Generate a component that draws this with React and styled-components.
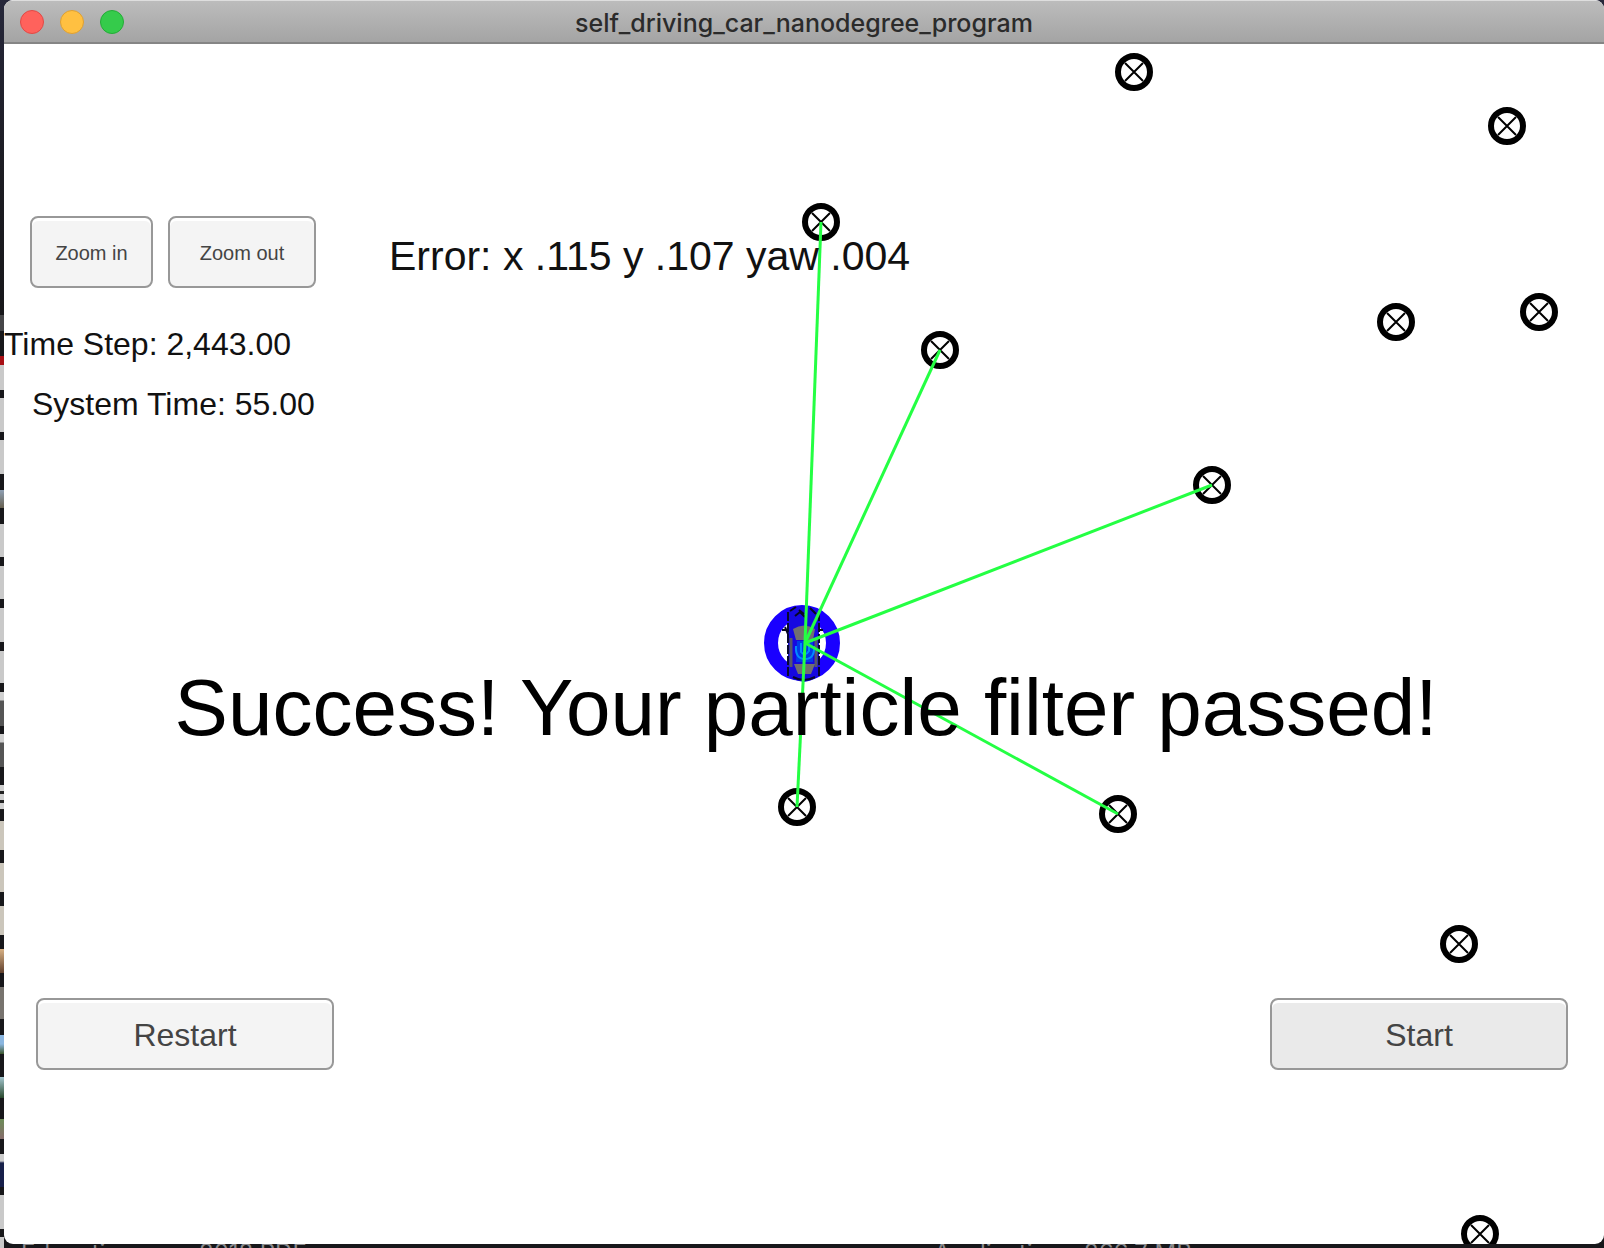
import React from "react";
import styled, { createGlobalStyle } from "styled-components";

const GlobalStyle = createGlobalStyle`
  * { box-sizing: border-box; }
  html, body, #root { height: 100%; }
  body { margin: 0; background: #17171b; overflow: hidden; }
  h1, p { margin: 0; }
`;

const Desktop = styled.div`
  display: grid;
  grid-template-columns: 4px minmax(0, 1fr);
  grid-template-rows: minmax(0, 1fr) 4px;
  height: 100vh;
  background: linear-gradient(#26273a 0, #1c1c22 180px, #17171a 320px);
  overflow: hidden;
`;

const ThumbStrip = styled.div`
  grid-row: 1 / 3;
  padding-top: 315px;
  overflow: hidden;
`;

const Thumb = styled.div`
  height: ${(p) => p.$h}px;
  margin-bottom: ${(p) => p.$gap}px;
  background: ${(p) => p.$fill};
`;

const Window = styled.main`
  display: flex;
  flex-direction: column;
  min-height: 0;
  background: #fff;
  border-radius: 9px;
  overflow: hidden;
  font-family: "Liberation Sans", Arial, sans-serif;
  color: #111;
`;

const TitleBar = styled.header`
  display: grid;
  grid-template-columns: 1fr auto 1fr;
  align-items: center;
  flex: none;
  height: 44px;
  padding: 0 16px;
  background: linear-gradient(#bcbcbc, #a4a4a4);
  border-top: 1px solid #dedede;
  border-bottom: 2px solid #858585;
`;

const Lights = styled.div`
  display: flex;
  gap: 16px;
`;

const Light = styled.button`
  width: 24px;
  height: 24px;
  padding: 0;
  border: 1px solid ${(p) => p.$edge};
  border-radius: 50%;
  background: ${(p) => p.$fill};
`;

const Title = styled.h1`
  padding-top: 2px;
  font: 500 25px/32px Inter, Roboto, sans-serif;
  color: #2b2b2b;
`;

const Scene = styled.div`
  position: relative;
  flex: 1;
  min-height: 0;
  overflow: hidden;
`;

const MapCanvas = styled.svg`
  position: absolute;
  inset: 0;
  width: 100%;
  height: 100%;
`;

const Hud = styled.div`
  position: relative;
  display: flex;
  flex-direction: column;
  height: 100%;
  padding: 172px 32px 174px 0;
`;

const Controls = styled.div`
  display: flex;
  align-items: center;
  gap: 15px;
  padding-left: 26px;
`;

const Button = styled.button`
  width: ${(p) => p.$w}px;
  height: 72px;
  padding: 2px 0 0;
  border: 2px solid #989898;
  border-radius: 8px;
  background: ${(p) => p.$fill || "#f4f4f4"};
  box-shadow: inset 0 3px 0 #fff;
  color: #444;
  font-family: "Liberation Sans", Arial, sans-serif;
  font-size: ${(p) => (p.$small ? 20 : 32)}px;
`;

const ErrorText = styled.p`
  padding: 8px 0 0 58px;
  font-size: 41px;
  line-height: 48px;
  white-space: nowrap;
`;

const Stats = styled.div`
  display: flex;
  flex-direction: column;
  gap: 20px;
  padding-top: 36px;
`;

const Stat = styled.p`
  padding-left: ${(p) => (p.$indent ? 28 : 0)}px;
  font-size: 32px;
  line-height: 40px;
`;

const Banner = styled.p`
  padding: 236px 0 0 36px;
  font-size: 80px;
  line-height: 96px;
  text-align: center;
  white-space: nowrap;
  color: #000;
`;

const Actions = styled.div`
  display: flex;
  justify-content: space-between;
  margin-top: auto;
  padding: 0 4px 0 32px;
`;

const FileStrip = styled.div`
  display: grid;
  grid-template-columns: 178px 735px 150px 1fr;
  padding-left: 17px;
  overflow: hidden;
  font: 24px/18px Inter, sans-serif;
  color: #8a8a8d;
`;

const paper = "#c9c9c9";
const thumbs = [
  [16, 25, "#454548"], [34, 8, "linear-gradient(#a80f14 9px, #c9c9c9 9px)"],
  [34, 8, paper], [34, 16, paper], [18, 16, "linear-gradient(#8fa0b4, #665f4f)"],
  [33, 9, paper], [33, 9, paper], [34, 9, paper], [32, 9, paper],
  [34, 8, "linear-gradient(#d0d0d0 8px, #555 9px)"], [33, 18, "linear-gradient(#d0d0d0 8px, #555 9px)"],
  [25, 11, "repeating-linear-gradient(#d0d0d0 0 6px, #222 6px 9px)"],
  [29, 13, "#cbc6bb"], [29, 14, "#cbc6bb"], [29, 14, "#cbc6bb"],
  [24, 14, "linear-gradient(#d8b184, #60402d)"], [32, 16, "#77736e"],
  [19, 23, "linear-gradient(#8ab6e0 9px, #3c552b)"], [21, 21, "linear-gradient(#a4c6cf, #28472c)"],
  [20, 15, "linear-gradient(#6c8c58, #866c6b)"], [33, 8, "linear-gradient(#ccc 7px, #17204a 9px)"],
  [34, 8, paper], [11, 0, paper],
];

const landmarks = [
  [1130, 28], [1503, 82], [817, 178], [1535, 268], [1392, 278], [936, 306],
  [1208, 441], [793, 763], [1114, 770], [1455, 900], [1476, 1190],
];
const sensed = [2, 5, 6, 7, 8];
const car = [801, 599];

function Landmark({ x, y }) {
  return (
    <g transform={`translate(${x} ${y})`} stroke="#000" fill="none">
      <circle r="16" strokeWidth="6" fill="#fff" />
      <path d="M-9-9 9 9M9-9-9 9" strokeWidth="2" />
    </g>
  );
}

function Car() {
  return (
    <g transform="translate(798 599)">
      <circle r="31" fill="#fff" stroke="#1a00ff" strokeWidth="14" />
      <path d="M-14-30Q-12-36 0-37 15-36 17-29V31Q15 37 2 39-12 37-14 31Z" fill="#1608e0" />
      <path d="M-14-31V34M17-31V34" stroke="#080830" strokeWidth="2" strokeDasharray="9 2" />
      <path d="M-11-5V24M14-5V24" stroke="#57576a" strokeWidth="3" />
      <path d="M-12-32l6-4M-7-27l5-4 5 5M8-35l6 6M-3-33l5 4M-20-13h6M-17-16l3 7M17-13h4" fill="none" stroke="#070720" strokeWidth="2" />
      <path d="M-9-14Q2-21 13-14L11-3H-6Z" fill="#716f70" />
      <path d="M-5-2H11V19H-6Z" fill="#003be9" />
      <path d="M-6 3Q-7 16 3 16T12 3M-1 0V9Q3 14 7 8V0" fill="none" stroke="#008cff" strokeWidth="2" />
      <path d="M-8 21H13L9 31H-4Z" fill="#716f70" />
      <path d="M-9 34Q2 40 13 34" fill="none" stroke="#07072c" strokeWidth="2" />
    </g>
  );
}

export default function App() {
  return (
    <>
      <GlobalStyle />
      <Desktop>
        <ThumbStrip>
          {thumbs.map(([h, gap, fill], i) => (
            <Thumb key={i} $h={h} $gap={gap} $fill={fill} />
          ))}
        </ThumbStrip>
        <Window>
          <TitleBar>
            <Lights>
              <Light aria-label="Close" $fill="#ff625c" $edge="#e14a46" />
              <Light aria-label="Minimize" $fill="#ffc041" $edge="#dea033" />
              <Light aria-label="Full screen" $fill="#35cb4b" $edge="#24ac37" />
            </Lights>
            <Title>self_driving_car_nanodegree_program</Title>
          </TitleBar>
          <Scene>
            <MapCanvas viewBox="0 0 1600 1200" aria-hidden="true">
              {landmarks.map(([x, y]) => (
                <Landmark key={`${x}-${y}`} x={x} y={y} />
              ))}
              <Car />
              <g stroke="#24ff43" strokeWidth="3">
                {sensed.map((i) => (
                  <line key={i} x1={car[0]} y1={car[1]} x2={landmarks[i][0]} y2={landmarks[i][1]} />
                ))}
              </g>
            </MapCanvas>
            <Hud>
              <Controls>
                <Button $w={123} $small>Zoom in</Button>
                <Button $w={148} $small>Zoom out</Button>
                <ErrorText>Error: x .115 y .107 yaw .004</ErrorText>
              </Controls>
              <Stats>
                <Stat>Time Step: 2,443.00</Stat>
                <Stat $indent>System Time: 55.00</Stat>
              </Stats>
              <Banner>Success! Your particle filter passed!</Banner>
              <Actions>
                <Button $w={298}>Restart</Button>
                <Button $w={298} $fill="#eaeaea">Start</Button>
              </Actions>
            </Hud>
          </Scene>
        </Window>
        <FileStrip>
          <span>Education</span>
          <span>2018.PDF</span>
          <span>Application</span>
          <span>266.7 MB</span>
        </FileStrip>
      </Desktop>
    </>
  );
}
